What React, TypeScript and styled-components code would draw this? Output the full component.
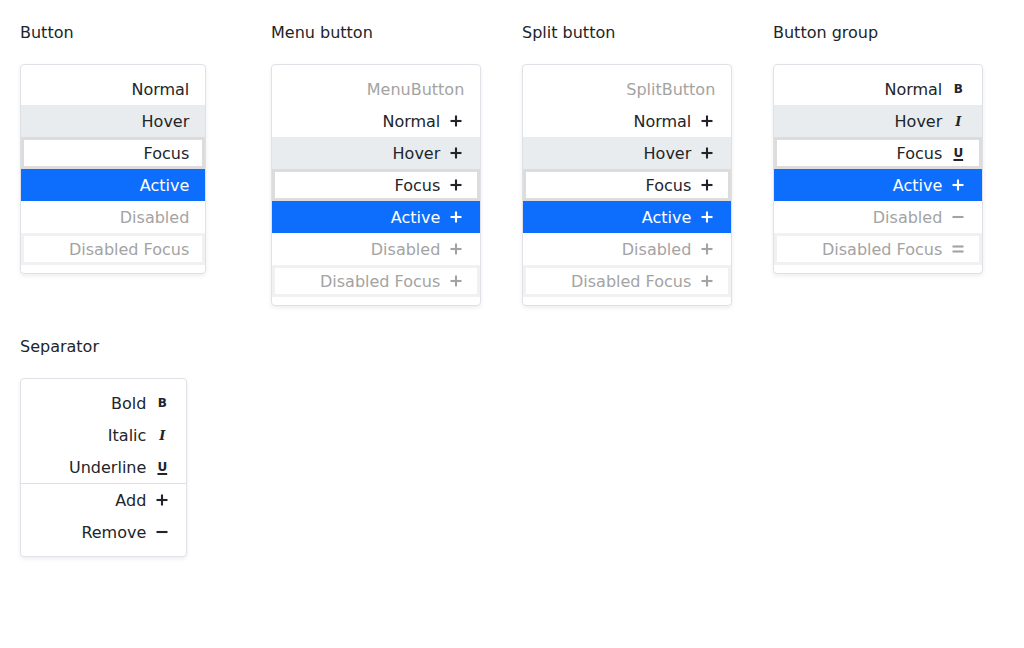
import React from "react";
import styled, { createGlobalStyle, css } from "styled-components";

const GlobalStyle = createGlobalStyle`
  html, body { margin: 0; padding: 0; background: #ffffff; }
  body {
    font-family: "DejaVu Sans", "Noto Sans", sans-serif;
    color: #212529;
  }
`;

type State = "normal" | "hover" | "focus" | "active" | "disabled" | "disabledFocus" | "label";
type IconKind = "plus" | "minus" | "equal" | "bold" | "italic" | "underline";

const Page = styled.div`
  display: grid;
  grid-template-columns: repeat(4, 235px);
  column-gap: 16px;
  row-gap: 28px;
  align-items: start;
  padding: 20px;
`;

const Section = styled.section`
  display: flex;
  flex-direction: column;
  align-items: flex-start;
`;

const Title = styled.h2`
  margin: 0 0 20px;
  padding-top: 1px;
  font-size: 16px;
  line-height: 23px;
  font-weight: 400;
  color: #212529;
`;

const Panel = styled.div`
  display: flex;
  flex-direction: column;
  padding: 8px 0;
  background: #ffffff;
  border: 1px solid #dee2e6;
  border-radius: 4px;
  box-shadow: 0 2px 4px rgba(0, 0, 0, 0.07);
`;

const stateStyles: Record<State, ReturnType<typeof css>> = {
  normal: css`color: #212529;`,
  hover: css`color: #212529; background: #e9ecef;`,
  focus: css`color: #212529; background: #ffffff; box-shadow: inset 0 0 0 3px #dcdcdc;`,
  active: css`color: #ffffff; background: #0d6efd;`,
  disabled: css`color: #a3a3a3;`,
  disabledFocus: css`color: #a3a3a3; box-shadow: inset 0 0 0 3px #f1f1f1;`,
  label: css`color: #a3a3a3;`,
};

const Item = styled.div<{ $state: State }>`
  height: 32px;
  display: flex;
  align-items: center;
  justify-content: flex-end;
  gap: 8px;
  padding: 0 16px 0 48px;
  font-size: 16px;
  white-space: nowrap;
  ${(p) => stateStyles[p.$state]}
`;

const IconBox = styled.span`
  width: 16px;
  height: 16px;
  display: inline-flex;
  align-items: center;
  justify-content: center;
  flex: none;
`;

const Glyph = styled.span<{ $kind: "bold" | "italic" | "underline" }>`
  line-height: 1;
  font-size: 12px;
  ${(p) =>
    p.$kind === "italic"
      ? css`
          font-family: "DejaVu Serif", "Liberation Serif", serif;
          font-style: italic;
          font-weight: 700;
          font-size: 13px;
        `
      : css`
          font-family: "DejaVu Sans", sans-serif;
          font-weight: 700;
        `}
  ${(p) =>
    p.$kind === "underline" &&
    css`
      text-decoration: underline;
      text-decoration-thickness: 1.5px;
      text-underline-offset: 2px;
    `}
`;

const Separator = styled.hr`
  margin: 0;
  border: 0;
  border-top: 1px solid #dee2e6;
  width: 100%;
`;

function Icon({ kind }: { kind: IconKind }) {
  if (kind === "bold") return <IconBox><Glyph $kind="bold">B</Glyph></IconBox>;
  if (kind === "italic") return <IconBox><Glyph $kind="italic">I</Glyph></IconBox>;
  if (kind === "underline") return <IconBox><Glyph $kind="underline">U</Glyph></IconBox>;
  return (
    <IconBox>
      <svg width="12" height="12" viewBox="0 0 12 12" fill="none" stroke="currentColor" strokeWidth="2.1">
        {kind === "plus" && (
          <>
            <line x1="0.5" y1="6" x2="11.5" y2="6" />
            <line x1="6" y1="0.5" x2="6" y2="11.5" />
          </>
        )}
        {kind === "minus" && <line x1="0.5" y1="6" x2="11.5" y2="6" />}
        {kind === "equal" && (
          <>
            <line x1="0.5" y1="3.5" x2="11.5" y2="3.5" />
            <line x1="0.5" y1="8.5" x2="11.5" y2="8.5" />
          </>
        )}
      </svg>
    </IconBox>
  );
}

type Row = { label: string; state: State; icon?: IconKind };

const states: Row[] = [
  { label: "Normal", state: "normal" },
  { label: "Hover", state: "hover" },
  { label: "Focus", state: "focus" },
  { label: "Active", state: "active" },
  { label: "Disabled", state: "disabled" },
  { label: "Disabled Focus", state: "disabledFocus" },
];

const withPlus = (rows: Row[]): Row[] => rows.map((r) => ({ ...r, icon: "plus" as IconKind }));

const groupIcons: IconKind[] = ["bold", "italic", "underline", "plus", "minus", "equal"];

function MenuRows({ rows }: { rows: Row[] }) {
  return (
    <>
      {rows.map((r) => (
        <Item key={r.label} $state={r.state}>
          <span>{r.label}</span>
          {r.icon && <Icon kind={r.icon} />}
        </Item>
      ))}
    </>
  );
}

export default function App() {
  return (
    <>
      <GlobalStyle />
      <Page>
        <Section>
          <Title>Button</Title>
          <Panel>
            <MenuRows rows={states} />
          </Panel>
        </Section>
        <Section>
          <Title>Menu button</Title>
          <Panel>
            <Item $state="label">MenuButton</Item>
            <MenuRows rows={withPlus(states)} />
          </Panel>
        </Section>
        <Section>
          <Title>Split button</Title>
          <Panel>
            <Item $state="label">SplitButton</Item>
            <MenuRows rows={withPlus(states)} />
          </Panel>
        </Section>
        <Section>
          <Title>Button group</Title>
          <Panel>
            <MenuRows rows={states.map((r, i) => ({ ...r, icon: groupIcons[i] }))} />
          </Panel>
        </Section>
        <Section>
          <Title>Separator</Title>
          <Panel>
            <MenuRows
              rows={[
                { label: "Bold", state: "normal", icon: "bold" },
                { label: "Italic", state: "normal", icon: "italic" },
                { label: "Underline", state: "normal", icon: "underline" },
              ]}
            />
            <Separator />
            <MenuRows
              rows={[
                { label: "Add", state: "normal", icon: "plus" },
                { label: "Remove", state: "normal", icon: "minus" },
              ]}
            />
          </Panel>
        </Section>
      </Page>
    </>
  );
}
